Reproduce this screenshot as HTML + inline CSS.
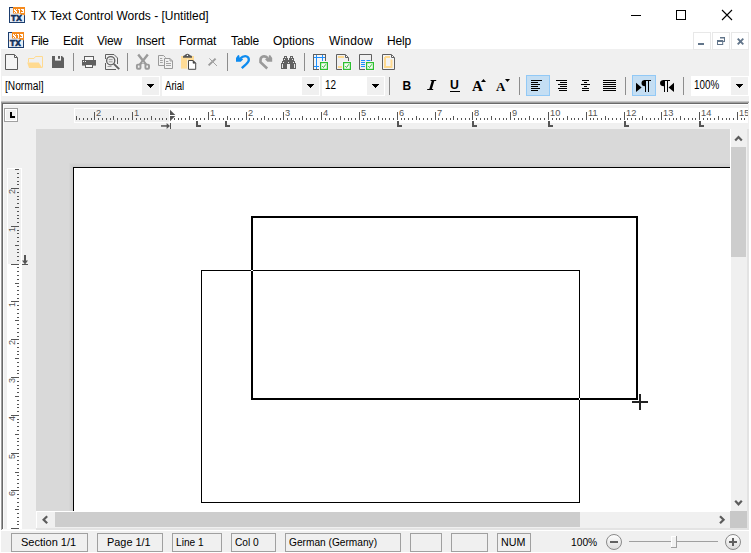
<!DOCTYPE html>
<html>
<head>
<meta charset="utf-8">
<title>TX Text Control Words</title>
<style>
html,body{margin:0;padding:0;}
body{width:751px;height:553px;overflow:hidden;background:#fff;font-family:"Liberation Sans",sans-serif;font-size:12px;color:#000;position:relative;}
.a{position:absolute;}
.t{position:absolute;white-space:pre;line-height:14px;height:14px;}
.sep{position:absolute;width:1px;background:#8d8d8d;}
.combo{position:absolute;background:#fff;height:20px;top:76px;}
.cbtn{position:absolute;top:1px;width:17px;height:18px;background:#f0f0f0;}
.cbtn:after{content:"";position:absolute;left:8px;top:10px;width:1px;height:1px;background:#000;box-shadow:-1px -1px 0 #000,0 -1px 0 #000,1px -1px 0 #000,-2px -2px 0 #000,-1px -2px 0 #000,0 -2px 0 #000,1px -2px 0 #000,2px -2px 0 #000,-3px -3px 0 #000,-2px -3px 0 #000,-1px -3px 0 #000,0 -3px 0 #000,1px -3px 0 #000,2px -3px 0 #000,3px -3px 0 #000;}
.ct{position:absolute;white-space:pre;font-size:12px;line-height:14px;top:3px;left:3px;transform-origin:0 50%;}
.pan{position:absolute;top:533px;height:17px;border:1px solid #a0a0a0;box-sizing:content-box;}
.st{position:absolute;white-space:pre;font-size:11.5px;line-height:13px;top:536px;transform-origin:0 50%;}
.ln{position:absolute;background:#000;}
svg{position:absolute;overflow:visible;}
.rl{position:absolute;font-size:9px;line-height:10px;height:10px;color:#555;white-space:pre;transform-origin:0 8px;transform:scale(1.03,1.08);}
.rv{transform-origin:0 0;transform:rotate(-90deg) scale(1.0,1.08);}
</style>
</head>
<body>
<!-- ===== gray client background ===== -->
<div class="a" id="tb" style="left:1px;top:49px;width:748px;height:503px;background:#f0f0f0;"></div>
<!-- ===== title bar ===== -->
<div class="t" id="title" style="left:31px;top:9px;letter-spacing:-0.02px;">TX Text Control Words - [Untitled]</div>
<!-- window controls -->
<div class="ln" style="left:631px;top:15px;width:10px;height:1px;"></div>
<div class="a" style="left:676px;top:10px;width:8px;height:8px;border:1px solid #000;"></div>
<svg style="left:722px;top:10px;" width="10" height="10" viewBox="0 0 10 10"><path d="M0 0 L10 10 M10 0 L0 10" stroke="#000" stroke-width="1.1" fill="none"/></svg>
<!-- ===== menu bar ===== -->
<div class="t" style="left:31px;top:34px;letter-spacing:-0.45px;">File</div>
<div class="t" style="left:63px;top:34px;letter-spacing:-0.15px;">Edit</div>
<div class="t" style="left:97px;top:34px;letter-spacing:-0.25px;">View</div>
<div class="t" style="left:136px;top:34px;letter-spacing:-0.25px;">Insert</div>
<div class="t" style="left:179px;top:34px;letter-spacing:-0.12px;">Format</div>
<div class="t" style="left:231px;top:34px;letter-spacing:-0.1px;">Table</div>
<div class="t" style="left:273px;top:34px;">Options</div>
<div class="t" style="left:329px;top:34px;letter-spacing:0.18px;">Window</div>
<div class="t" style="left:387px;top:34px;letter-spacing:-0.15px;">Help</div>
<!-- MDI child buttons -->
<div class="a" style="left:693px;top:32px;width:16px;height:16px;border:1px solid #e8e8e8;background:#fff;"></div>
<div class="a" style="left:712px;top:32px;width:16px;height:16px;border:1px solid #e8e8e8;background:#fff;"></div>
<div class="a" style="left:731px;top:32px;width:16px;height:16px;border:1px solid #e8e8e8;background:#fff;"></div>
<div class="a" style="left:698px;top:43px;width:6px;height:2px;background:#62758a;"></div>
<svg style="left:717px;top:37px;" width="8" height="8" viewBox="0 0 8 8"><path d="M3 0h5v1.5h-5zM7 0h1v5h-1zM6.2 4h1.8v1h-1.8zM0 3h6.2v2h-6.2zM0 3h1v5h-1zM5.2 3h1v5h-1zM0 7h6.2v1h-6.2z" fill="#62758a"/></svg>
<svg style="left:737px;top:38px;" width="7" height="7" viewBox="0 0 7 7"><path d="M0.7 0.7 L6.3 6.3 M6.3 0.7 L0.7 6.3" stroke="#62758a" stroke-width="1.9" fill="none"/></svg>

<!-- ===== app icons (title + menu) ===== -->
<svg style="left:0;top:0;" width="751" height="553" viewBox="0 0 751 553">
<defs>
<g id="txicon">
<rect x="0.5" y="0.5" width="15" height="15" fill="#e6edf6" stroke="#1b3d6e" stroke-width="1"/>
<path d="M4 0 H16 V8.6 L13.6 7.4 L12.6 8.6 L11 6.6 H4 Z" fill="#f58a1e"/>
<path fill="#fff" d="M5 2h1v1h-1zM7 2h1v1h-1zM6 3h1v1h-1zM6 4h1v1h-1zM5 5h1v1h-1zM7 5h1v1h-1zM5 3h1v1h-1zM7 4h1v1h-1zM9 2h1v1h-1zM10 2h1v1h-1zM10 3h1v1h-1zM10 4h1v1h-1zM10 5h1v1h-1zM12 2h1v1h-1zM13 2h1v1h-1zM14 2h1v1h-1zM13 3h1v1h-1zM14 3h1v1h-1zM14 4h1v1h-1zM12 5h1v1h-1zM13 5h1v1h-1zM14 5h1v1h-1z"/>
<text x="2.1" y="13.7" font-family="Liberation Sans" font-weight="bold" font-size="8.8" fill="#13305c" stroke="#13305c" stroke-width="0.7" textLength="10.6" lengthAdjust="spacingAndGlyphs">TX</text>
</g>
<g id="chk">
<rect x="-1" y="-1" width="10" height="10" fill="#f6f2f6"/>
<rect x="0.6" y="0.6" width="6.8" height="6.8" fill="#f4fbf2" stroke="#2cc030" stroke-width="1.2"/>
<path d="M2.2 4.2 L3.5 5.5 L5.8 2.3" stroke="#25b52b" stroke-width="0.95" fill="none"/>
</g>
</defs>
<use href="#txicon" x="9" y="7"/>
<use href="#txicon" x="8" y="32"/>

<!-- ===== toolbar 1 icons ===== -->
<!-- new -->
<path d="M5.5 54.5 H14.5 L17.5 57.5 V69.5 H5.5 Z" fill="#f4f4f4" stroke="#5a5a5a"/>
<path d="M14.5 55 V57.5 H17" fill="#fff" stroke="#5a5a5a"/>
<!-- open (disabled pale) -->
<path d="M28.5 62.5 V58.5 H34 L35.5 56.5 H42.5 V67.5" fill="none" stroke="#ffda90"/>
<path d="M27.2 62.4 H38.8 L42.4 68 H29 Z" fill="#ffda90"/>
<!-- save -->
<path d="M52 56 H62 L64 58 V68 H52 Z" fill="#606060"/>
<rect x="55" y="56" width="6" height="4.6" fill="#f0f0f0"/>
<rect x="58" y="56" width="2" height="2.8" fill="#606060"/>
<!-- sep -->
<rect x="73" y="53" width="1" height="18" fill="#8c8c8c"/>
<!-- print -->
<rect x="84.5" y="56.5" width="9" height="4" fill="#f6f6f6" stroke="#606060"/>
<rect x="82" y="60" width="14" height="5.6" fill="#606060"/>
<rect x="85.5" y="64.5" width="7" height="3" fill="#f6f6f6" stroke="#606060"/>
<rect x="83" y="61" width="1" height="1" fill="#f0f0f0"/><rect x="85" y="61" width="1" height="1" fill="#f0f0f0"/>
<!-- print preview -->
<path d="M105.5 59 V54.5 H114 L117.5 58 V64 M105.5 63 V69.5 H116" fill="none" stroke="#606060"/>
<circle cx="110.7" cy="60.7" r="4.1" fill="#ececec" stroke="#606060" stroke-width="1.3"/>
<path d="M108.8 59.6 H112.6 M108.8 61.8 H112.6" stroke="#8a8a8a" stroke-width="0.8"/>
<path d="M107.5 66.5 H111.5" stroke="#8a8a8a" stroke-width="0.8"/>
<path d="M113.8 63.8 L119.2 69.2" stroke="#606060" stroke-width="1.9"/>
<!-- sep -->
<rect x="127" y="53" width="1" height="18" fill="#8c8c8c"/>
<!-- cut (disabled) -->
<path d="M138.2 54.6 L146.2 64.8 M147.8 54.6 L139.8 64.8" stroke="#9a9a9a" stroke-width="2.4" fill="none"/>
<path d="M141.6 60.5 H144.4 L145.6 64 H140.4 Z" fill="#9a9a9a"/>
<rect x="136.9" y="64.6" width="3.6" height="4.1" rx="0.9" fill="none" stroke="#9a9a9a" stroke-width="1.9"/>
<rect x="145.4" y="64.6" width="3.6" height="4.1" rx="0.9" fill="none" stroke="#9a9a9a" stroke-width="1.9"/>
<rect x="142.4" y="62.2" width="1.2" height="1.3" fill="#ececec"/>
<!-- copy (disabled) -->
<path d="M164 65.5 H158.5 V55.5 H163.5 L165.5 57.5" fill="none" stroke="#9a9a9a"/>
<path d="M160 58.5 H162.2 M160 60.5 H162.8 M160 62.5 H162.8" stroke="#9a9a9a" stroke-width="0.9"/>
<path d="M164.5 58.5 H170 L172.5 61 V68.5 H164.5 Z" fill="#f2f2f2" stroke="#9a9a9a"/>
<path d="M170 58.5 V61 H172.5" fill="none" stroke="#9a9a9a" stroke-width="0.9"/>
<path d="M166 61.5 H168.3 M166 63.5 H171 M166 65.5 H171" stroke="#9a9a9a" stroke-width="0.9"/>
<!-- paste -->
<rect x="181" y="56" width="13" height="12.6" fill="#ffdc96"/>
<path d="M183 57.8 V56.6 Q183 55.5 184.8 55.3 Q185.4 53.7 187.4 53.7 Q189.4 53.7 190 55.3 Q192 55.5 192 56.6 V57.8 Z" fill="#555"/>
<circle cx="187.4" cy="55.4" r="0.7" fill="#fff"/>
<path d="M188.5 60.5 H193 L195.7 63.2 V69.3 H188.5 Z" fill="#fff" stroke="#484848"/>
<path d="M193 60.5 V63.2 H195.7 Z" fill="#484848" stroke="#484848" stroke-width="0.6"/>
<rect x="187" y="59.2" width="1" height="10.8" fill="#f4ede0"/>
<!-- delete (disabled) -->
<path d="M208.6 65.4 L215.6 58.6" stroke="#9a9a9a" stroke-width="2"/>
<path d="M209.4 58.4 L217 66" stroke="#a4a4a4" stroke-width="1"/>
<!-- sep -->
<rect x="227" y="53" width="1" height="18" fill="#8c8c8c"/>
<!-- undo -->
<path d="M236 58 L238.1 55.1 L239.3 55.5 L239.5 57.5 L243.2 59.3 L240.8 61.8 L236 61.8 Z" fill="#0d8bf0"/>
<path d="M240.6 58.3 C242.2 56.4 244 56.1 245.2 56.1 C247.6 56.1 248.9 58 248.8 60 C248.7 62.6 246 64.3 241.8 68.2" fill="none" stroke="#0d8bf0" stroke-width="2.4"/>
<!-- redo (disabled) -->
<path d="M272.2 58 L270.1 55.1 L268.9 55.5 L268.7 57.5 L265 59.3 L267.4 61.8 L272.2 61.8 Z" fill="#9a9a9a"/>
<path d="M267.8 58.2 C266 56.3 264 56.2 262.9 56.5 C261.2 57 260.5 58.3 260.5 60 V62.3 L267.2 68.5" fill="none" stroke="#9a9a9a" stroke-width="2.6"/>
<!-- find (binoculars) -->
<path d="M284 56h3v2h-3zM283 58h5v3h-5zM282 61h6v2h-6zM281 63h6v6h-6zM290 56h3v2h-3zM289 58h5v3h-5zM289 61h6v2h-6zM290 63h6v6h-6zM287 60h3v4h-3z" fill="#626262" shape-rendering="crispEdges"/>
<path d="M285 57h1v1h-1zM284 59h1v1h-1zM283 61.5h1v1h-1zM282 64h1v4h-1zM291 57h1v1h-1zM292 59h1v1h-1zM293 61.5h1v1h-1zM294 64h1v4h-1zM288 62h1v1h-1z" fill="#e8e8e8" shape-rendering="crispEdges"/>
<!-- sep -->
<rect x="304" y="53" width="1" height="18" fill="#8c8c8c"/>
<!-- table props -->
<rect x="313.5" y="54.5" width="12" height="15" fill="#f6f6f6" stroke="#606060"/>
<path d="M316.5 55 V69 M322.5 55 V62 M314 57.5 H325 M314 66.5 H320" stroke="#1e90ff" stroke-width="1" fill="none"/>
<use href="#chk" x="320" y="62"/>
<!-- header/footer -->
<path d="M343 69.5 H336.5 V54.5 H345.5 L348.5 57.5 V62" fill="none" stroke="#606060"/>
<path d="M345.5 55 V57.5 H348" fill="#fff" stroke="#606060"/>
<rect x="338" y="56" width="6" height="2" fill="#ffda90"/>
<rect x="338" y="66" width="5" height="2" fill="#ffda90"/>
<use href="#chk" x="343" y="62"/>
<!-- columns -->
<path d="M366 69.5 H359.5 V54.5 H371.5 V62" fill="none" stroke="#606060"/>
<path d="M361 60.5 H365 M361 62.5 H365 M361 64.5 H365 M361 66.5 H365 M366.5 60.5 H370.5" stroke="#1e90ff" stroke-width="1.1"/>
<use href="#chk" x="366" y="62"/>
<!-- page frame -->
<path d="M382.5 54.5 H391.5 L394.5 57.5 V69.5 H382.5 Z" fill="#f4f4f4" stroke="#606060"/>
<path d="M391.5 55 V57.5 H394" fill="#fff" stroke="#606060"/>
<path d="M385 57 H390 M385 57 V67 H391.5 V59.5" fill="none" stroke="#ffda90" stroke-width="2"/>
</svg>

<!-- ===== toolbar 2 ===== -->
<div class="combo" style="left:2px;width:158px;"><span class="ct" id="c_style" style="transform:scaleX(0.85);">[Normal]</span><div class="cbtn" style="left:140px;"></div></div>
<div class="combo" style="left:162px;width:158px;"><span class="ct" id="c_font" style="transform:scaleX(0.80);">Arial</span><div class="cbtn" style="left:140px;"></div></div>
<div class="combo" style="left:322px;width:63px;"><span class="ct" id="c_size" style="top:2px;transform:scaleX(0.83);">12</span><div class="cbtn" style="left:45px;"></div></div>
<div class="combo" style="left:691px;width:58px;"><span class="ct" id="c_zoom" style="top:2px;transform:scaleX(0.82);">100%</span><div class="cbtn" style="left:40px;"></div></div>
<div class="sep" style="left:389px;top:77px;height:18px;"></div>
<div class="sep" style="left:519px;top:77px;height:18px;"></div>
<div class="sep" style="left:625px;top:77px;height:18px;"></div>
<div class="sep" style="left:683px;top:77px;height:18px;"></div>
<!-- active buttons -->
<div class="a" style="left:526px;top:75px;width:22px;height:19px;border:1px solid #92c9f6;background:#c4def3;"></div>
<div class="a" style="left:632px;top:75px;width:22px;height:19px;border:1px solid #92c9f6;background:#c4def3;"></div>
<!-- B I U A A -->
<div class="a" id="bB" style="left:402.5px;top:79px;font:bold 12px/14px 'Liberation Sans';">B</div>
<div class="a" id="bU" style="left:450px;top:78px;font:bold 12.5px/14px 'Liberation Sans';transform:scaleX(0.98);transform-origin:0 0;">U</div>
<div class="ln" style="left:450px;top:91px;width:10px;height:1px;"></div>
<div class="a" id="bA1" style="left:472px;top:78px;font:bold 15px/16px 'Liberation Serif';">A</div>
<div class="a" id="bA2" style="left:496px;top:80px;font:bold 13px/14px 'Liberation Serif';">A</div>
<svg style="left:0;top:0;" width="751" height="553" viewBox="0 0 751 553" shape-rendering="crispEdges">
<path d="M481 82 L483.5 79 L486 82 Z" fill="#000" shape-rendering="auto"/>
<path d="M505 79 L510 79 L507.5 82 Z" fill="#000" shape-rendering="auto"/>
<!-- align left -->
<g fill="#000">
<rect x="531" y="80" width="11" height="1"/><rect x="531" y="82" width="7" height="1"/><rect x="531" y="84" width="9" height="1"/><rect x="531" y="86" width="7" height="1"/><rect x="531" y="88" width="9" height="1"/><rect x="531" y="90" width="7" height="1"/>
<!-- align right -->
<rect x="556" y="80" width="11" height="1"/><rect x="560" y="82" width="7" height="1"/><rect x="558" y="84" width="9" height="1"/><rect x="560" y="86" width="7" height="1"/><rect x="558" y="88" width="9" height="1"/><rect x="559" y="90" width="8" height="1"/>
<!-- center -->
<rect x="582" y="80" width="7" height="1"/><rect x="584" y="82" width="3" height="1"/><rect x="581" y="84" width="9" height="1"/><rect x="584" y="86" width="3" height="1"/><rect x="582" y="88" width="7" height="1"/><rect x="582" y="90" width="7" height="1"/>
<!-- justify -->
<rect x="603" y="80" width="13" height="1"/><rect x="603" y="82" width="13" height="1"/><rect x="603" y="84" width="13" height="1"/><rect x="603" y="86" width="13" height="1"/><rect x="603" y="88" width="13" height="1"/><rect x="603" y="90" width="13" height="1"/>
</g>
<!-- LTR pilcrow -->
<g shape-rendering="auto" fill="#000">
<path d="M636 82.8 L641.6 87.4 L636 92 Z"/>
<path d="M646 80 V86.3 H645 Q641.5 86.3 641.5 83.1 Q641.5 80 645 80 Z"/>
<rect x="645" y="80" width="1" height="12" shape-rendering="crispEdges"/><rect x="648" y="80" width="1" height="12" shape-rendering="crispEdges"/><rect x="644" y="80" width="7" height="1" shape-rendering="crispEdges"/>
<!-- RTL pilcrow -->
<path d="M674 82.8 L668.6 87.4 L674 92 Z"/>
<path d="M665 80 V86.3 H664 Q660 86.3 660 83.1 Q660 80 664 80 Z"/>
<rect x="664" y="80" width="1" height="12" shape-rendering="crispEdges"/><rect x="667" y="80" width="1" height="12" shape-rendering="crispEdges"/><rect x="663" y="80" width="7" height="1" shape-rendering="crispEdges"/>
<!-- italic I -->
<path d="M430.6 80 H436.2 V81 H434.3 L431.9 89 H433.2 V90 H427.2 V89 H429.3 L431.7 81 H430.6 Z"/>
</g>
</svg>

<!-- ===== sunken client edge ===== -->
<div class="a" style="left:1px;top:101px;width:748px;height:1px;background:#c6c6c6;"></div>
<div class="a" style="left:1px;top:102px;width:748px;height:1px;background:#a0a0a0;"></div>
<div class="a" style="left:2px;top:103px;width:746px;height:1px;background:#696969;"></div>
<div class="a" style="left:3px;top:104px;width:745px;height:1px;background:#fff;"></div>
<div class="a" style="left:1px;top:102px;width:1px;height:428px;background:#a0a0a0;"></div>
<div class="a" style="left:2px;top:103px;width:1px;height:426px;background:#696969;"></div>
<div class="a" style="left:3px;top:104px;width:1px;height:425px;background:#fafafa;"></div>
<div class="a" style="left:747px;top:129px;width:2px;height:401px;background:#e3e3e3;"></div>
<div class="a" style="left:749px;top:49px;width:2px;height:504px;background:#fff;"></div>
<div class="a" style="left:36px;top:528px;width:713px;height:2px;background:#e3e3e3;"></div>
<div class="a" style="left:3px;top:529px;width:33px;height:1px;background:#fafafa;"></div>
<div class="a" style="left:1px;top:530px;width:749px;height:1px;background:#fff;"></div>
<div class="a" style="left:4px;top:108px;width:10px;height:10px;border:1px solid #fff;outline:1px solid #a0a0a0;outline-offset:0;margin:1px;background:#f0f0f0;"></div>
<div class="ln" style="left:10px;top:112px;width:2px;height:6px;"></div><div class="ln" style="left:10px;top:116px;width:5px;height:2px;"></div>
<!-- ===== horizontal ruler ===== -->
<div class="a" style="left:74px;top:108px;width:674px;height:15px;background:#fff;"></div>
<div class="a" style="left:75px;top:109px;width:94px;height:13px;background:#f0f0f0;"></div>
<svg style="left:0;top:0;" width="751" height="553" viewBox="0 0 751 553" shape-rendering="crispEdges">
<g fill="#555">
<rect x="76" y="116" width="1" height="4"/>
<rect x="79" y="118" width="1" height="2"/>
<rect x="83" y="118" width="1" height="2"/>
<rect x="87" y="118" width="1" height="2"/>
<rect x="91" y="118" width="1" height="2"/>
<rect x="94" y="112" width="1" height="8"/>
<rect x="98" y="118" width="1" height="2"/>
<rect x="102" y="118" width="1" height="2"/>
<rect x="106" y="118" width="1" height="2"/>
<rect x="110" y="118" width="1" height="2"/>
<rect x="113" y="116" width="1" height="4"/>
<rect x="117" y="118" width="1" height="2"/>
<rect x="121" y="118" width="1" height="2"/>
<rect x="125" y="118" width="1" height="2"/>
<rect x="128" y="118" width="1" height="2"/>
<rect x="132" y="112" width="1" height="8"/>
<rect x="136" y="118" width="1" height="2"/>
<rect x="140" y="118" width="1" height="2"/>
<rect x="144" y="118" width="1" height="2"/>
<rect x="147" y="118" width="1" height="2"/>
<rect x="151" y="116" width="1" height="4"/>
<rect x="155" y="118" width="1" height="2"/>
<rect x="159" y="118" width="1" height="2"/>
<rect x="162" y="118" width="1" height="2"/>
<rect x="166" y="118" width="1" height="2"/>
<rect x="174" y="118" width="1" height="2"/>
<rect x="178" y="118" width="1" height="2"/>
<rect x="181" y="118" width="1" height="2"/>
<rect x="185" y="118" width="1" height="2"/>
<rect x="189" y="116" width="1" height="4"/>
<rect x="193" y="118" width="1" height="2"/>
<rect x="196" y="118" width="1" height="2"/>
<rect x="200" y="118" width="1" height="2"/>
<rect x="204" y="118" width="1" height="2"/>
<rect x="208" y="112" width="1" height="8"/>
<rect x="212" y="118" width="1" height="2"/>
<rect x="215" y="118" width="1" height="2"/>
<rect x="219" y="118" width="1" height="2"/>
<rect x="223" y="118" width="1" height="2"/>
<rect x="227" y="116" width="1" height="4"/>
<rect x="230" y="118" width="1" height="2"/>
<rect x="234" y="118" width="1" height="2"/>
<rect x="238" y="118" width="1" height="2"/>
<rect x="242" y="118" width="1" height="2"/>
<rect x="246" y="112" width="1" height="8"/>
<rect x="249" y="118" width="1" height="2"/>
<rect x="253" y="118" width="1" height="2"/>
<rect x="257" y="118" width="1" height="2"/>
<rect x="261" y="118" width="1" height="2"/>
<rect x="264" y="116" width="1" height="4"/>
<rect x="268" y="118" width="1" height="2"/>
<rect x="272" y="118" width="1" height="2"/>
<rect x="276" y="118" width="1" height="2"/>
<rect x="280" y="118" width="1" height="2"/>
<rect x="283" y="112" width="1" height="8"/>
<rect x="287" y="118" width="1" height="2"/>
<rect x="291" y="118" width="1" height="2"/>
<rect x="295" y="118" width="1" height="2"/>
<rect x="299" y="118" width="1" height="2"/>
<rect x="302" y="116" width="1" height="4"/>
<rect x="306" y="118" width="1" height="2"/>
<rect x="310" y="118" width="1" height="2"/>
<rect x="314" y="118" width="1" height="2"/>
<rect x="317" y="118" width="1" height="2"/>
<rect x="321" y="112" width="1" height="8"/>
<rect x="325" y="118" width="1" height="2"/>
<rect x="329" y="118" width="1" height="2"/>
<rect x="333" y="118" width="1" height="2"/>
<rect x="336" y="118" width="1" height="2"/>
<rect x="340" y="116" width="1" height="4"/>
<rect x="344" y="118" width="1" height="2"/>
<rect x="348" y="118" width="1" height="2"/>
<rect x="351" y="118" width="1" height="2"/>
<rect x="355" y="118" width="1" height="2"/>
<rect x="359" y="112" width="1" height="8"/>
<rect x="363" y="118" width="1" height="2"/>
<rect x="367" y="118" width="1" height="2"/>
<rect x="370" y="118" width="1" height="2"/>
<rect x="374" y="118" width="1" height="2"/>
<rect x="378" y="116" width="1" height="4"/>
<rect x="382" y="118" width="1" height="2"/>
<rect x="385" y="118" width="1" height="2"/>
<rect x="389" y="118" width="1" height="2"/>
<rect x="393" y="118" width="1" height="2"/>
<rect x="397" y="112" width="1" height="8"/>
<rect x="401" y="118" width="1" height="2"/>
<rect x="404" y="118" width="1" height="2"/>
<rect x="408" y="118" width="1" height="2"/>
<rect x="412" y="118" width="1" height="2"/>
<rect x="416" y="116" width="1" height="4"/>
<rect x="419" y="118" width="1" height="2"/>
<rect x="423" y="118" width="1" height="2"/>
<rect x="427" y="118" width="1" height="2"/>
<rect x="431" y="118" width="1" height="2"/>
<rect x="435" y="112" width="1" height="8"/>
<rect x="438" y="118" width="1" height="2"/>
<rect x="442" y="118" width="1" height="2"/>
<rect x="446" y="118" width="1" height="2"/>
<rect x="450" y="118" width="1" height="2"/>
<rect x="453" y="116" width="1" height="4"/>
<rect x="457" y="118" width="1" height="2"/>
<rect x="461" y="118" width="1" height="2"/>
<rect x="465" y="118" width="1" height="2"/>
<rect x="469" y="118" width="1" height="2"/>
<rect x="472" y="112" width="1" height="8"/>
<rect x="476" y="118" width="1" height="2"/>
<rect x="480" y="118" width="1" height="2"/>
<rect x="484" y="118" width="1" height="2"/>
<rect x="487" y="118" width="1" height="2"/>
<rect x="491" y="116" width="1" height="4"/>
<rect x="495" y="118" width="1" height="2"/>
<rect x="499" y="118" width="1" height="2"/>
<rect x="503" y="118" width="1" height="2"/>
<rect x="506" y="118" width="1" height="2"/>
<rect x="510" y="112" width="1" height="8"/>
<rect x="514" y="118" width="1" height="2"/>
<rect x="518" y="118" width="1" height="2"/>
<rect x="521" y="118" width="1" height="2"/>
<rect x="525" y="118" width="1" height="2"/>
<rect x="529" y="116" width="1" height="4"/>
<rect x="533" y="118" width="1" height="2"/>
<rect x="537" y="118" width="1" height="2"/>
<rect x="540" y="118" width="1" height="2"/>
<rect x="544" y="118" width="1" height="2"/>
<rect x="548" y="112" width="1" height="8"/>
<rect x="552" y="118" width="1" height="2"/>
<rect x="556" y="118" width="1" height="2"/>
<rect x="559" y="118" width="1" height="2"/>
<rect x="563" y="118" width="1" height="2"/>
<rect x="567" y="116" width="1" height="4"/>
<rect x="571" y="118" width="1" height="2"/>
<rect x="574" y="118" width="1" height="2"/>
<rect x="578" y="118" width="1" height="2"/>
<rect x="582" y="118" width="1" height="2"/>
<rect x="586" y="112" width="1" height="8"/>
<rect x="590" y="118" width="1" height="2"/>
<rect x="593" y="118" width="1" height="2"/>
<rect x="597" y="118" width="1" height="2"/>
<rect x="601" y="118" width="1" height="2"/>
<rect x="605" y="116" width="1" height="4"/>
<rect x="608" y="118" width="1" height="2"/>
<rect x="612" y="118" width="1" height="2"/>
<rect x="616" y="118" width="1" height="2"/>
<rect x="620" y="118" width="1" height="2"/>
<rect x="624" y="112" width="1" height="8"/>
<rect x="627" y="118" width="1" height="2"/>
<rect x="631" y="118" width="1" height="2"/>
<rect x="635" y="118" width="1" height="2"/>
<rect x="639" y="118" width="1" height="2"/>
<rect x="642" y="116" width="1" height="4"/>
<rect x="646" y="118" width="1" height="2"/>
<rect x="650" y="118" width="1" height="2"/>
<rect x="654" y="118" width="1" height="2"/>
<rect x="658" y="118" width="1" height="2"/>
<rect x="661" y="112" width="1" height="8"/>
<rect x="665" y="118" width="1" height="2"/>
<rect x="669" y="118" width="1" height="2"/>
<rect x="673" y="118" width="1" height="2"/>
<rect x="676" y="118" width="1" height="2"/>
<rect x="680" y="116" width="1" height="4"/>
<rect x="684" y="118" width="1" height="2"/>
<rect x="688" y="118" width="1" height="2"/>
<rect x="692" y="118" width="1" height="2"/>
<rect x="695" y="118" width="1" height="2"/>
<rect x="699" y="112" width="1" height="8"/>
<rect x="703" y="118" width="1" height="2"/>
<rect x="707" y="118" width="1" height="2"/>
<rect x="710" y="118" width="1" height="2"/>
<rect x="714" y="118" width="1" height="2"/>
<rect x="718" y="116" width="1" height="4"/>
<rect x="722" y="118" width="1" height="2"/>
<rect x="726" y="118" width="1" height="2"/>
<rect x="729" y="118" width="1" height="2"/>
<rect x="733" y="118" width="1" height="2"/>
<rect x="737" y="112" width="1" height="8"/>
<rect x="741" y="118" width="1" height="2"/>
<rect x="744" y="118" width="1" height="2"/>
</g>
<g fill="#555" shape-rendering="auto">
<path d="M170 109.8 L175.3 115.1 L170 115.1 Z"/><path d="M170 121.2 L175.3 115.9 L170 115.9 Z"/>
<rect x="161" y="125.2" width="8" height="1.5"/><path d="M166.6 123 L170 126 L166.6 129 Z"/><rect x="170" y="123" width="1" height="6"/>
<rect x="196" y="121" width="2" height="6" shape-rendering="crispEdges"/><rect x="196" y="125" width="5" height="2" shape-rendering="crispEdges"/>
<rect x="225" y="121" width="2" height="6" shape-rendering="crispEdges"/><rect x="225" y="125" width="5" height="2" shape-rendering="crispEdges"/>
<rect x="397" y="121" width="2" height="6" shape-rendering="crispEdges"/><rect x="397" y="125" width="5" height="2" shape-rendering="crispEdges"/>
<rect x="472" y="121" width="2" height="6" shape-rendering="crispEdges"/><rect x="472" y="125" width="5" height="2" shape-rendering="crispEdges"/>
<rect x="548" y="121" width="2" height="6" shape-rendering="crispEdges"/><rect x="548" y="125" width="5" height="2" shape-rendering="crispEdges"/>
<rect x="624" y="121" width="2" height="6" shape-rendering="crispEdges"/><rect x="624" y="125" width="5" height="2" shape-rendering="crispEdges"/>
<rect x="699" y="121" width="2" height="6" shape-rendering="crispEdges"/><rect x="699" y="125" width="5" height="2" shape-rendering="crispEdges"/>
</g>
</svg>
<div class="rl" style="left:96px;top:108px;">2</div>
<div class="rl" style="left:134px;top:108px;">1</div>
<div class="rl" style="left:210px;top:108px;">1</div>
<div class="rl" style="left:248px;top:108px;">2</div>
<div class="rl" style="left:285px;top:108px;">3</div>
<div class="rl" style="left:323px;top:108px;">4</div>
<div class="rl" style="left:361px;top:108px;">5</div>
<div class="rl" style="left:399px;top:108px;">6</div>
<div class="rl" style="left:437px;top:108px;">7</div>
<div class="rl" style="left:474px;top:108px;">8</div>
<div class="rl" style="left:512px;top:108px;">9</div>
<div class="rl" style="left:550px;top:108px;">10</div>
<div class="rl" style="left:588px;top:108px;">11</div>
<div class="rl" style="left:626px;top:108px;">12</div>
<div class="rl" style="left:663px;top:108px;">13</div>
<div class="rl" style="left:701px;top:108px;">14</div>
<div class="rl" style="left:739px;top:108px;">15</div>
<!-- ===== vertical ruler ===== -->
<div class="a" style="left:7px;top:168px;width:15px;height:361px;background:#fff;"></div>
<div class="a" style="left:8px;top:169px;width:13px;height:95px;background:#f0f0f0;"></div>
<svg style="left:0;top:0;" width="751" height="553" viewBox="0 0 751 553" shape-rendering="crispEdges">
<g fill="#555">
<rect x="15" y="169" width="4" height="1"/>
<rect x="17" y="173" width="2" height="1"/>
<rect x="17" y="177" width="2" height="1"/>
<rect x="17" y="181" width="2" height="1"/>
<rect x="17" y="184" width="2" height="1"/>
<rect x="11" y="188" width="8" height="1"/>
<rect x="17" y="192" width="2" height="1"/>
<rect x="17" y="196" width="2" height="1"/>
<rect x="17" y="199" width="2" height="1"/>
<rect x="17" y="203" width="2" height="1"/>
<rect x="15" y="207" width="4" height="1"/>
<rect x="17" y="211" width="2" height="1"/>
<rect x="17" y="215" width="2" height="1"/>
<rect x="17" y="218" width="2" height="1"/>
<rect x="17" y="222" width="2" height="1"/>
<rect x="11" y="226" width="8" height="1"/>
<rect x="17" y="230" width="2" height="1"/>
<rect x="17" y="233" width="2" height="1"/>
<rect x="17" y="237" width="2" height="1"/>
<rect x="17" y="241" width="2" height="1"/>
<rect x="15" y="245" width="4" height="1"/>
<rect x="17" y="249" width="2" height="1"/>
<rect x="17" y="252" width="2" height="1"/>
<rect x="17" y="256" width="2" height="1"/>
<rect x="17" y="260" width="2" height="1"/>
<rect x="11" y="264" width="8" height="1"/>
<rect x="17" y="267" width="2" height="1"/>
<rect x="17" y="271" width="2" height="1"/>
<rect x="17" y="275" width="2" height="1"/>
<rect x="17" y="279" width="2" height="1"/>
<rect x="15" y="283" width="4" height="1"/>
<rect x="17" y="286" width="2" height="1"/>
<rect x="17" y="290" width="2" height="1"/>
<rect x="17" y="294" width="2" height="1"/>
<rect x="17" y="298" width="2" height="1"/>
<rect x="11" y="301" width="8" height="1"/>
<rect x="17" y="305" width="2" height="1"/>
<rect x="17" y="309" width="2" height="1"/>
<rect x="17" y="313" width="2" height="1"/>
<rect x="17" y="317" width="2" height="1"/>
<rect x="15" y="320" width="4" height="1"/>
<rect x="17" y="324" width="2" height="1"/>
<rect x="17" y="328" width="2" height="1"/>
<rect x="17" y="332" width="2" height="1"/>
<rect x="17" y="336" width="2" height="1"/>
<rect x="11" y="339" width="8" height="1"/>
<rect x="17" y="343" width="2" height="1"/>
<rect x="17" y="347" width="2" height="1"/>
<rect x="17" y="351" width="2" height="1"/>
<rect x="17" y="354" width="2" height="1"/>
<rect x="15" y="358" width="4" height="1"/>
<rect x="17" y="362" width="2" height="1"/>
<rect x="17" y="366" width="2" height="1"/>
<rect x="17" y="370" width="2" height="1"/>
<rect x="17" y="373" width="2" height="1"/>
<rect x="11" y="377" width="8" height="1"/>
<rect x="17" y="381" width="2" height="1"/>
<rect x="17" y="385" width="2" height="1"/>
<rect x="17" y="388" width="2" height="1"/>
<rect x="17" y="392" width="2" height="1"/>
<rect x="15" y="396" width="4" height="1"/>
<rect x="17" y="400" width="2" height="1"/>
<rect x="17" y="404" width="2" height="1"/>
<rect x="17" y="407" width="2" height="1"/>
<rect x="17" y="411" width="2" height="1"/>
<rect x="11" y="415" width="8" height="1"/>
<rect x="17" y="419" width="2" height="1"/>
<rect x="17" y="422" width="2" height="1"/>
<rect x="17" y="426" width="2" height="1"/>
<rect x="17" y="430" width="2" height="1"/>
<rect x="15" y="434" width="4" height="1"/>
<rect x="17" y="438" width="2" height="1"/>
<rect x="17" y="441" width="2" height="1"/>
<rect x="17" y="445" width="2" height="1"/>
<rect x="17" y="449" width="2" height="1"/>
<rect x="11" y="453" width="8" height="1"/>
<rect x="17" y="456" width="2" height="1"/>
<rect x="17" y="460" width="2" height="1"/>
<rect x="17" y="464" width="2" height="1"/>
<rect x="17" y="468" width="2" height="1"/>
<rect x="15" y="472" width="4" height="1"/>
<rect x="17" y="475" width="2" height="1"/>
<rect x="17" y="479" width="2" height="1"/>
<rect x="17" y="483" width="2" height="1"/>
<rect x="17" y="487" width="2" height="1"/>
<rect x="11" y="490" width="8" height="1"/>
<rect x="17" y="494" width="2" height="1"/>
<rect x="17" y="498" width="2" height="1"/>
<rect x="17" y="502" width="2" height="1"/>
<rect x="17" y="506" width="2" height="1"/>
<rect x="15" y="509" width="4" height="1"/>
<rect x="17" y="513" width="2" height="1"/>
<rect x="17" y="517" width="2" height="1"/>
<rect x="17" y="521" width="2" height="1"/>
<rect x="17" y="524" width="2" height="1"/>
<rect x="11" y="528" width="8" height="1"/>
</g>
<g fill="#555" shape-rendering="auto"><rect x="24" y="255" width="2" height="7"/><path d="M22 260.4 L28 260.4 L25 264.4 Z"/><rect x="22" y="264" width="6" height="1"/></g>
</svg>
<div class="rl rv" style="left:5.9px;top:194.3px;">2</div>
<div class="rl rv" style="left:5.9px;top:232.3px;">1</div>
<div class="rl rv" style="left:5.9px;top:307.3px;">1</div>
<div class="rl rv" style="left:5.9px;top:345.3px;">2</div>
<div class="rl rv" style="left:5.9px;top:383.3px;">3</div>
<div class="rl rv" style="left:5.9px;top:421.3px;">4</div>
<div class="rl rv" style="left:5.9px;top:459.3px;">5</div>
<div class="rl rv" style="left:5.9px;top:496.3px;">6</div>
<!-- ===== document area ===== -->
<div class="a" id="doc" style="left:36px;top:129px;width:694px;height:382px;background:#d9d9d9;overflow:hidden;">
  <div class="a" id="page" style="left:37px;top:38px;width:700px;height:400px;background:#fff;border:1px solid #000;box-shadow:0 0 0 1px #cdcdcd,0 0 0 2px #d0d0d0,0 0 0 3px #d3d3d3,0 0 0 4px #d6d6d6;"></div>
</div>
<!-- drawn rectangles (XOR style) -->
<div class="a" style="left:201px;top:270px;width:377px;height:231px;border:1px solid #000;"></div>
<div class="a" style="left:251px;top:216px;width:383px;height:180px;border:2px solid #000;"></div>
<div class="a" style="left:251px;top:270px;width:2px;height:1px;background:#fff;"></div>
<div class="a" style="left:579px;top:398px;width:1px;height:2px;background:#fff;"></div>
<!-- cross cursor -->
<div class="a" style="left:639px;top:394px;width:2px;height:16px;background:#222;"></div>
<div class="a" style="left:632px;top:401px;width:16px;height:2px;background:#222;"></div>
<!-- vertical scrollbar -->
<div class="a" style="left:730px;top:129px;width:1px;height:383px;background:#fff;"></div>
<div class="a" style="left:731px;top:129px;width:16px;height:382px;background:#f0f0f0;"></div>
<div class="a" style="left:731px;top:147px;width:15px;height:110px;background:#cdcdcd;"></div>
<!-- horizontal scrollbar -->
<div class="a" style="left:36px;top:511px;width:695px;height:1px;background:#fff;"></div>
<div class="a" style="left:36px;top:512px;width:1px;height:16px;background:#fff;"></div>
<div class="a" style="left:37px;top:512px;width:693px;height:16px;background:#f0f0f0;"></div>
<div class="a" style="left:55px;top:512px;width:525px;height:15px;background:#cdcdcd;"></div>
<div class="a" style="left:730px;top:511px;width:17px;height:17px;background:#c8c8c8;"></div>
<svg style="left:0;top:0;" width="751" height="553" viewBox="0 0 751 553">
<g fill="none" stroke="#5c5c5c" stroke-width="2.2">
<path d="M735.2 140.6 L738.5 137.1 L741.8 140.6"/>
<path d="M735.2 500.8 L738.5 504.3 L741.8 500.8"/>
<path d="M47.2 516.3 L43.6 519.8 L47.2 523.3"/>
<path d="M720 516.3 L723.6 519.8 L720 523.3"/>
</g>
</svg>

<!-- ===== status bar ===== -->
<div class="pan" style="left:11px;width:75px;"></div>
<div class="pan" style="left:97px;width:64px;"></div>
<div class="pan" style="left:172px;width:48px;"></div>
<div class="pan" style="left:231px;width:43px;"></div>
<div class="pan" style="left:285px;width:114px;"></div>
<div class="pan" style="left:410px;width:30px;"></div>
<div class="pan" style="left:451px;width:35px;"></div>
<div class="pan" style="left:497px;width:32px;"></div>
<div class="st" id="s1" style="left:21px;transform:scaleX(0.959);">Section 1/1</div>
<div class="st" id="s2" style="left:107px;transform:scaleX(0.947);">Page 1/1</div>
<div class="st" id="s3" style="left:176px;transform:scaleX(0.881);">Line 1</div>
<div class="st" id="s4" style="left:235px;transform:scaleX(0.886);">Col 0</div>
<div class="st" id="s5" style="left:289px;transform:scaleX(0.883);">German (Germany)</div>
<div class="st" id="s6" style="left:501px;transform:scaleX(0.932);">NUM</div>
<div class="st" id="s7" style="left:571px;transform:scaleX(0.891);">100%</div>
<svg style="left:0;top:0;" width="751" height="553" viewBox="0 0 751 553">
<defs><linearGradient id="btn" x1="0" y1="0" x2="0" y2="1"><stop offset="0" stop-color="#ffffff"/><stop offset="1" stop-color="#dcdcdc"/></linearGradient></defs>
<circle cx="614" cy="542" r="7.5" fill="url(#btn)" stroke="#8a8a8a" stroke-width="1"/>
<rect x="610" y="541" width="8" height="2" fill="#606060"/>
<circle cx="733" cy="542" r="7.5" fill="url(#btn)" stroke="#8a8a8a" stroke-width="1"/>
<rect x="729" y="541" width="8" height="2" fill="#606060"/><rect x="732" y="538" width="2" height="8" fill="#606060"/>
<rect x="629" y="541" width="89" height="1" fill="#a0a0a0"/>
<rect x="671" y="536" width="6" height="12" fill="#f2f2f2"/><rect x="671" y="536" width="1" height="12" fill="#fff"/><rect x="671" y="536" width="6" height="1" fill="#fff"/><rect x="676" y="536" width="1" height="12" fill="#a0a0a0"/><rect x="671" y="547" width="6" height="1" fill="#a0a0a0"/>
</svg>

<!-- right edge overlay -->
<div class="a" style="left:748px;top:105px;width:1px;height:24px;background:#f0f0f0;"></div>
<div class="a" style="left:747px;top:129px;width:2px;height:401px;background:#e3e3e3;"></div>
<div class="a" style="left:749px;top:49px;width:2px;height:504px;background:#fff;"></div>
</body>
</html>
